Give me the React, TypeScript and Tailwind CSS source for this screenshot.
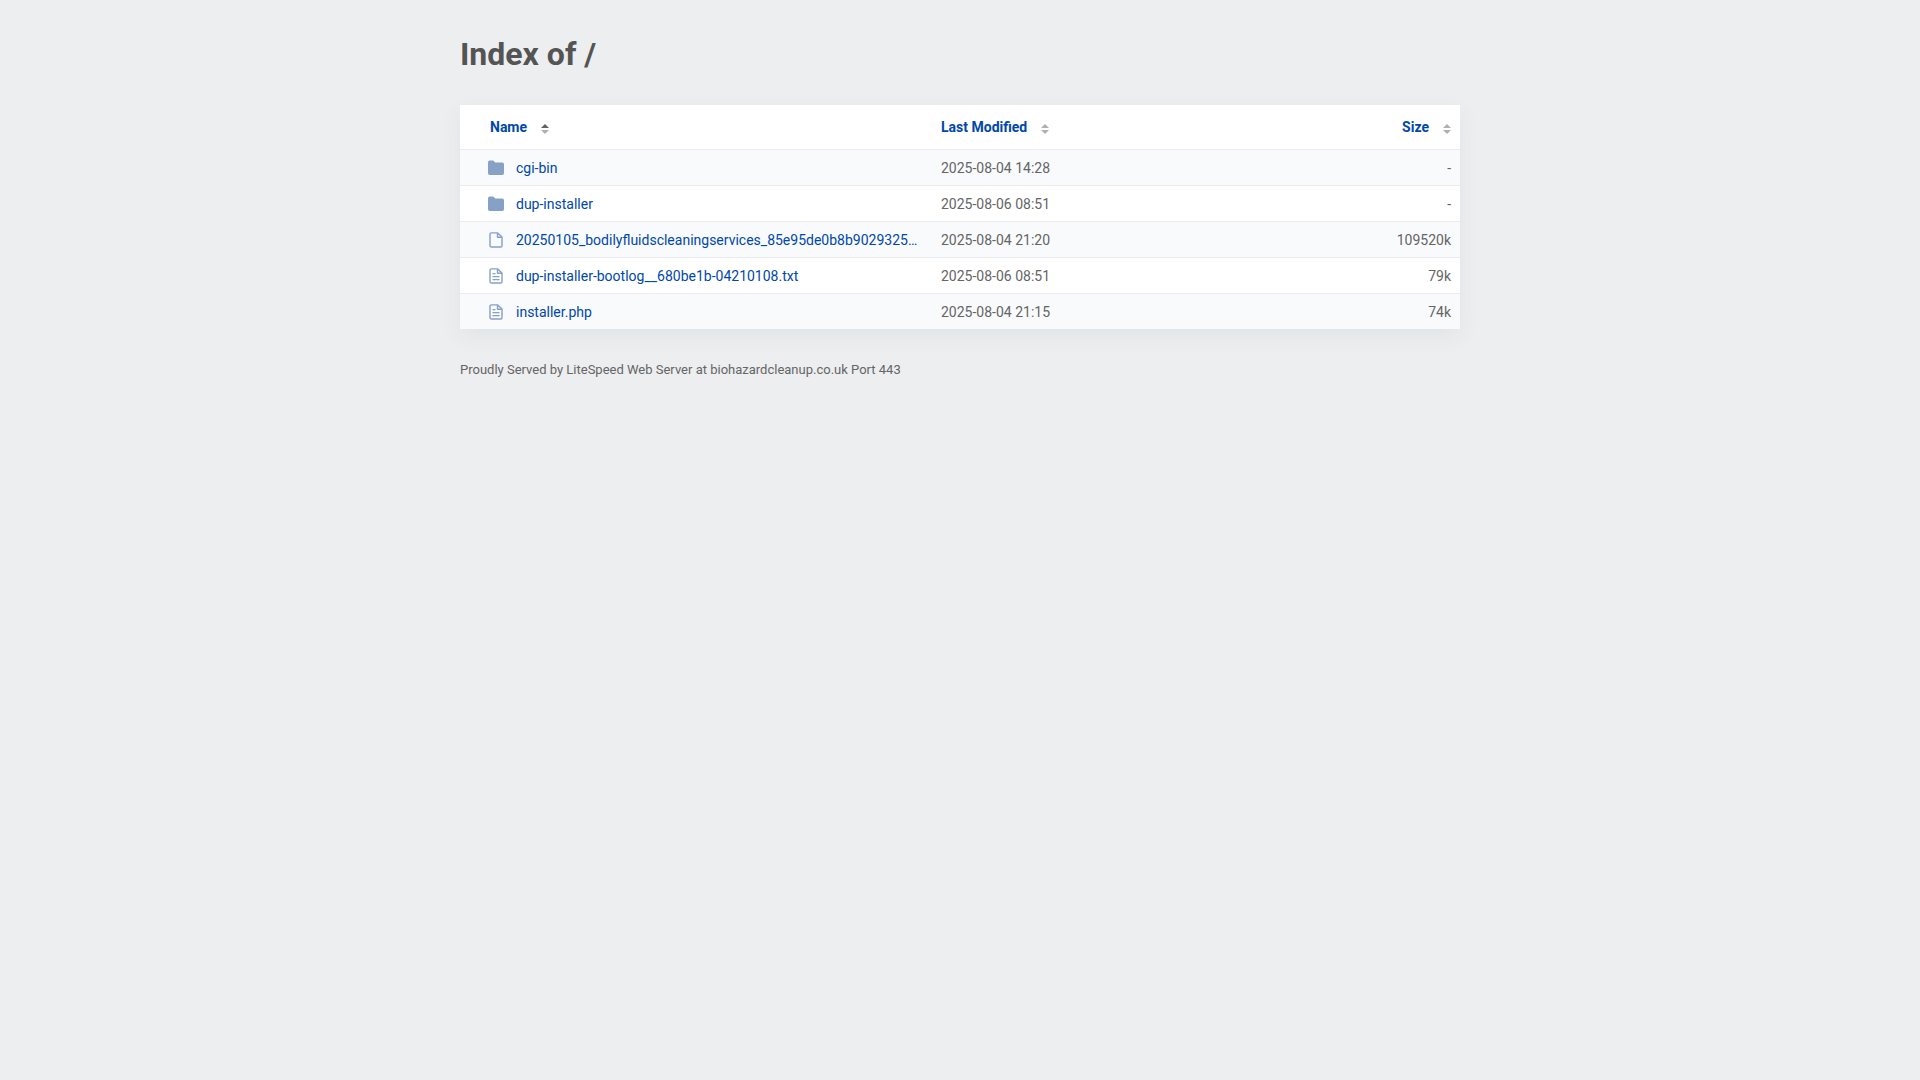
interface Entry {
  name: string;
  kind: "folder" | "file" | "text";
  modified: string;
  size: string;
}

const entries: Entry[] = [
  { name: "cgi-bin", kind: "folder", modified: "2025-08-04 14:28", size: "-" },
  { name: "dup-installer", kind: "folder", modified: "2025-08-06 08:51", size: "-" },
  {
    name: "20250105_bodilyfluidscleaningservices_85e95de0b8b9029325…",
    kind: "file",
    modified: "2025-08-04 21:20",
    size: "109520k",
  },
  {
    name: "dup-installer-bootlog__680be1b-04210108.txt",
    kind: "text",
    modified: "2025-08-06 08:51",
    size: "79k",
  },
  { name: "installer.php", kind: "text", modified: "2025-08-04 21:15", size: "74k" },
];

function EntryIcon({ kind }: { kind: Entry["kind"] }) {
  if (kind === "folder") {
    return (
      <svg width="16" height="16" viewBox="0 0 16 16" fill="#87a0c5" className="shrink-0" aria-hidden="true">
        <path d="M0 2.4A1.8 1.8 0 0 1 1.8.6h3.4L7.3 2.5h7A1.7 1.7 0 0 1 16 4.2v9a1.8 1.8 0 0 1-1.8 1.8H1.8A1.8 1.8 0 0 1 0 13.2z" />
      </svg>
    );
  }

  return (
    <svg
      width="16"
      height="16"
      viewBox="0 0 16 16"
      fill="none"
      stroke="#87a0c5"
      strokeWidth="1.4"
      strokeLinejoin="round"
      className="shrink-0"
      aria-hidden="true"
    >
      <path d="M9.7.9H3.3A1.3 1.3 0 0 0 2 2.2v11.5A1.3 1.3 0 0 0 3.3 15h9.4a1.3 1.3 0 0 0 1.3-1.3V5.1z" />
      <path d="M9.5.9v4.4H14" />
      {kind === "text" && <path d="M4.5 5.6h3M4.5 8.6h7M4.5 11.6h7" />}
    </svg>
  );
}

function SortButton({ label, ascending }: { label: string; ascending?: boolean }) {
  return (
    <button type="button" className="inline-flex items-center gap-[14px] font-bold text-[#0047ab]">
      {label}
      <svg width="8" height="10" viewBox="0 0 8 10" className="mt-1" aria-hidden="true">
        <path d="M0 4 4 0l4 4z" fill={ascending ? "#626262" : "#b0b0b0"} />
        <path d="M0 6h8l-4 4z" fill="#b0b0b0" />
      </svg>
    </button>
  );
}

export default function App() {
  return (
    <div className="min-h-screen bg-[#edeef0] px-5 pt-[34px] font-['Roboto',sans-serif] text-sm text-[#656565]">
      <main className="mx-auto max-w-[1000px]">
        <h1 className="mb-[30px] text-[32px] leading-[41px] font-bold text-[#545454]">Index of /</h1>

        <table className="w-full table-fixed border-collapse bg-white shadow-[0_7px_22px_0_rgba(20,65,70,0.06)]">
          <colgroup>
            <col className="w-[47%]" />
            <col className="w-[33%]" />
            <col className="w-1/5" />
          </colgroup>
          <thead>
            <tr className="h-11">
              <th className="pl-[30px] text-left" aria-sort="ascending">
                <SortButton label="Name" ascending />
              </th>
              <th className="pl-[11px] text-left">
                <SortButton label="Last Modified" />
              </th>
              <th className="pr-[9px] text-right">
                <SortButton label="Size" />
              </th>
            </tr>
          </thead>
          <tbody>
            {entries.map((entry) => (
              <tr key={entry.name} className="h-9 border-t border-[#e9ebee] odd:bg-[#f9fafc]">
                <td className="pt-px pl-7">
                  <a href="#" className="flex items-center gap-3 text-[#0047ab]">
                    <EntryIcon kind={entry.kind} />
                    <span className="whitespace-nowrap">{entry.name}</span>
                  </a>
                </td>
                <td className="pt-px pl-[11px]">{entry.modified}</td>
                <td className="pt-px pr-[9px] text-right">{entry.size}</td>
              </tr>
            ))}
          </tbody>
        </table>

        <footer className="mt-[31px] text-[13px] leading-5">
          Proudly Served by LiteSpeed Web Server at biohazardcleanup.co.uk Port 443
        </footer>
      </main>
    </div>
  );
}
